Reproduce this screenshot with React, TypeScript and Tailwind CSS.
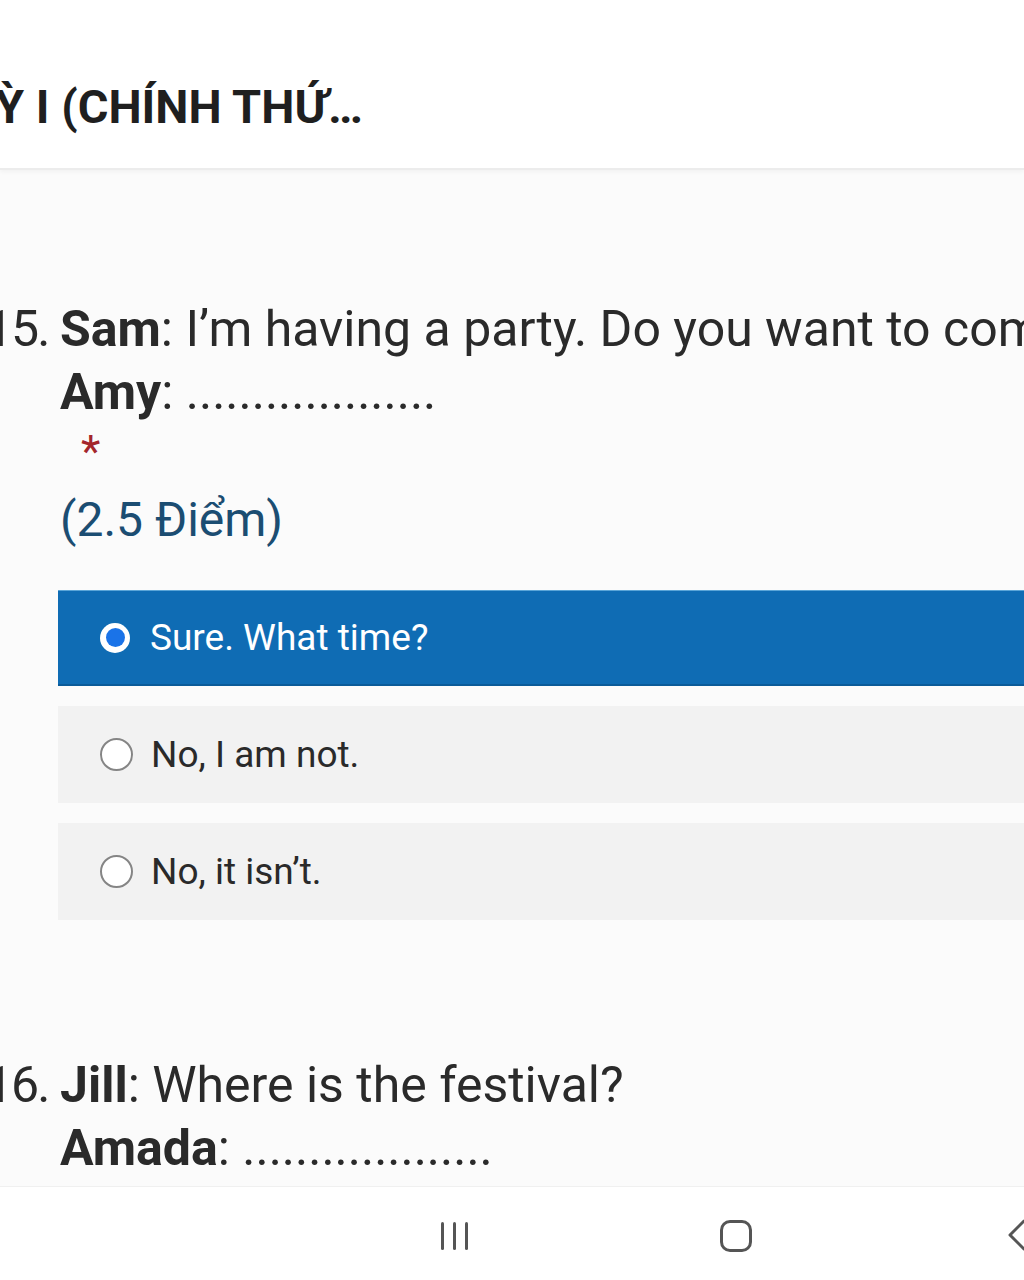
const font = { fontFamily: "Roboto, 'Noto Sans', sans-serif" }

function Option({ label, selected }: { label: string; selected?: boolean }) {
  return (
    <div
      className={
        selected
          ? "flex items-center h-[96px] pl-[42px] bg-[#0f6cb4] border-t border-[#5aa5d8] border-b-2 border-b-[#0b5b99]"
          : "flex items-center h-[97px] pl-[42px] bg-[#f2f2f2]"
      }
    >
      {selected ? (
        <span className="w-[30px] h-[30px] rounded-full bg-white flex items-center justify-center">
          <span className="w-[19px] h-[19px] rounded-full bg-[#1a73e8]" />
        </span>
      ) : (
        <span className="w-[33px] h-[33px] rounded-full bg-white border-2 border-[#858585]" />
      )}
      <span
        className={
          selected
            ? "ml-[20px] text-[37px] text-white"
            : "ml-[18px] text-[37px] text-[#2a2a2a]"
        }
      >
        {label}
      </span>
    </div>
  )
}

function Question({ num, speaker, line, reply }: { num: string; speaker: string; line: string; reply: string }) {
  return (
    <div className="text-[50px] leading-[63px] text-[#2a2a2a]">
      <div className="flex whitespace-nowrap">
        <span className="w-[60px] -ml-[15px] mr-[15px] text-right tracking-[-2px]">{num}</span>
        <span>
          <b className="font-bold">{speaker}</b>: {line}
        </span>
      </div>
      <div className="pl-[60px] whitespace-nowrap">
        <b className="font-bold">{reply}</b>: ...................
      </div>
    </div>
  )
}

export default function App() {
  return (
    <div className="w-[1024px] h-[1280px] flex flex-col overflow-hidden bg-[#fbfbfb]" style={font}>
      {/* Form title bar */}
      <header className="h-[170px] shrink-0 bg-white border-b-2 border-[#ececec] shadow-[0_2px_4px_rgba(0,0,0,0.04)]">
        <h1 className="pt-[83px] -ml-[5px] text-[47px] leading-[48px] font-bold text-[#1f1f1f] whitespace-nowrap">
          Ỳ I (CHÍNH THỨ…
        </h1>
      </header>

      <main className="flex-1 overflow-hidden pt-[128px]">
        <Question num="15." speaker="Sam" line="I’m having a party. Do you want to come?" reply="Amy" />

        <div className="pl-[81px] mt-[8px] text-[45px] leading-[40px] text-[#a4262c]">*</div>

        <div className="pl-[60px] mt-[18px] text-[48px] leading-[60px] text-[#1b4d72]">(2.5 Điểm)</div>

        <div className="ml-[58px] w-[1000px] mt-[40px] flex flex-col gap-[20px]">
          <Option label="Sure. What time?" selected />
          <Option label="No, I am not." />
          <Option label="No, it isn’t." />
        </div>

        <div className="mt-[134px]">
          <Question num="16." speaker="Jill" line="Where is the festival?" reply="Amada" />
        </div>
      </main>

      {/* Android navigation bar */}
      <nav className="h-[94px] shrink-0 bg-white border-t border-[#f0f0f0] relative">
        <div className="absolute left-[441px] top-[35px] flex gap-[9px]">
          <span className="w-[3px] h-[28px] bg-[#555] rounded-full" />
          <span className="w-[3px] h-[28px] bg-[#555] rounded-full" />
          <span className="w-[3px] h-[28px] bg-[#555] rounded-full" />
        </div>
        <div className="absolute left-[720px] top-[33px] w-[32px] h-[32px] rounded-[10px] border-[3px] border-[#555]" />
        <svg className="absolute left-[1004px] top-[30px]" width="30" height="36" viewBox="0 0 30 36">
          <path d="M20 4 L6 18 L20 32" fill="none" stroke="#555" strokeWidth="3" strokeLinecap="round" strokeLinejoin="round" />
        </svg>
      </nav>
    </div>
  )
}
